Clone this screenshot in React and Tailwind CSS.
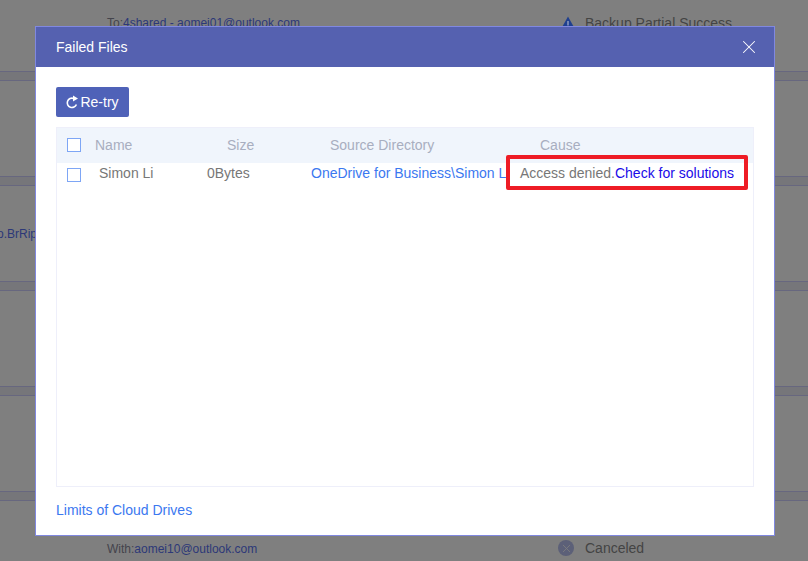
import React from 'react';
import { X } from 'lucide-react';

const font = { fontFamily: '"Liberation Sans", Arial, sans-serif' };

const Band = () => <div className="h-[10px] border-y border-[#67677f] bg-[#76767a]" />;

const RetryIcon = () => (
  <svg width="13" height="14" viewBox="0 0 13 14" fill="none" className="mr-px">
    <path d="M10.4 9.4A4.7 4.7 0 1 1 7.6 3.4" stroke="white" strokeWidth="1.6" />
    <path d="M7 0.6 L12 3.4 L7 6.6 Z" fill="white" />
  </svg>
);

const Checkbox = () => <div className="w-[14px] h-[14px] border-[1.5px] border-[#7ea6f5] bg-white" />;

const App = () => {
  return (
    <div className="relative w-[808px] h-[561px] overflow-hidden bg-[#7f7f7f] text-sm" style={font}>
      {/* page behind the overlay */}
      <div className="flex flex-col">
        <div className="h-[71px] relative">
          <div className="pl-[107px] pt-[15px] text-xs text-[#44444c]">
            To:<span className="text-[#2c3878]">4shared - aomei01@outlook.com</span>
          </div>
          <div className="absolute left-[560px] top-[13px] flex items-center gap-[9px] text-[#444]">
            <svg width="16" height="15" viewBox="0 0 16 15">
              <path d="M8 0.5 L15.8 14.5 H0.2 Z" fill="#1f3f8f" />
              <path d="M7.5 5 H8.5 V9.5 H7.5 Z M7.5 10.5 H8.5 V11.5 H7.5 Z" fill="#c4c8d8" />
            </svg>
            <span>Backup Partial Success</span>
          </div>
        </div>
        <Band />
        <div className="h-[95px]" />
        <Band />
        <div className="h-[95px] flex items-center">
          <div className="-ml-[3px] text-xs text-[#2c3878] whitespace-nowrap">o.BrRip.mp4</div>
        </div>
        <Band />
        <div className="h-[95px]" />
        <Band />
        <div className="h-[95px]" />
        <Band />
        <div className="h-[60px] relative">
          <div className="pl-[107px] pt-[40px] text-xs text-[#44444c]">
            With:<span className="text-[#2c3878]">aomei10@outlook.com</span>
          </div>
          <div className="absolute left-[558px] top-[37px] flex items-center gap-[11px] text-[#444]">
            <div className="w-4 h-4 rounded-full bg-[#5c6078] flex items-center justify-center">
              <X size={13} strokeWidth={1.5} className="text-[#7f7f7f]" />
            </div>
            <span>Canceled</span>
          </div>
        </div>
      </div>

      {/* dialog */}
      <div className="absolute left-[35px] top-[26px] w-[740px] h-[510px] border border-[#8088e0] bg-white flex flex-col">
        <div className="h-[40px] bg-[#5561b0] flex items-center justify-between pl-5 pr-[14px] text-white">
          <span>Failed Files</span>
          <X size={22} strokeWidth={1.1} />
        </div>
        <div className="flex-1 flex flex-col px-5 pt-5">
          <button className="w-[73px] h-[30px] rounded-[2px] bg-[#4f62b8] text-white flex items-center justify-center">
            <RetryIcon />Re-try
          </button>
          <div className="relative mt-[10px] h-[360px] border border-[#eeeffa]">
            <div className="h-[35px] bg-[#f0f5fc] relative text-[#a8aec0]">
              <div className="absolute left-[10px] top-[10px]"><Checkbox /></div>
              <span className="absolute left-[38px] top-[7px]">Name</span>
              <span className="absolute left-[170px] top-[7px]">Size</span>
              <span className="absolute left-[273px] top-[7px]">Source Directory</span>
              <span className="absolute left-[483px] top-[7px]">Cause</span>
            </div>
            <div className="h-[24px] relative text-[#777]">
              <div className="absolute left-[10px] top-[5px]"><Checkbox /></div>
              <span className="absolute left-[42px] top-0">Simon Li</span>
              <span className="absolute left-[150px] top-0">0Bytes</span>
              <span className="absolute left-[254px] top-0 w-[196px] overflow-hidden whitespace-nowrap text-[#3b78f0]">OneDrive for Business\Simon Li</span>
              <span className="absolute left-[463px] top-0 whitespace-nowrap">
                Access denied.<span className="text-[#1a0ae8]">Check for solutions</span>
              </span>
            </div>
            {/* red annotation */}
            <div className="absolute left-[449px] top-[27px] w-[242px] h-[35px] border-[4px] border-[#ee1c25] rounded-[2px]" />
          </div>
          <a className="mt-[13px] text-[#3b78f0]">Limits of Cloud Drives</a>
        </div>
      </div>
    </div>
  );
};

export default App;
